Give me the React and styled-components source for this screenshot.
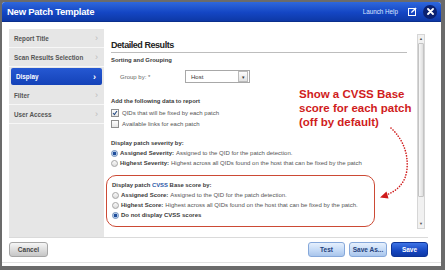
import React from "react";
import styled, { createGlobalStyle } from "styled-components";

const GlobalStyle = createGlobalStyle`
  html, body { margin: 0; padding: 0; background: #6b6b6b; }
  body { font-family: "Liberation Sans", Arial, sans-serif; }
`;

const Frame = styled.div`
  width: 445px;
  height: 270px;
  box-sizing: border-box;
  padding: 2px 4px 4px 2px;
  background: #6b6b6b;
`;

const Window = styled.div`
  width: 100%;
  height: 100%;
  background: #fff;
  display: flex;
  flex-direction: column;
  border-radius: 3px 3px 0 0;
  overflow: hidden;
`;

const TitleBar = styled.div`
  height: 19px;
  display: flex;
  align-items: center;
  padding: 0 4px 0 5px;
  background: linear-gradient(#2f68dc, #1446c4 55%, #0d38a6);
  border-bottom: 1px solid #0a2f8c;
`;

const Title = styled.div`
  color: #fff;
  font-weight: bold;
  font-size: 9.5px;
  letter-spacing: -0.25px;
  flex: 1;
`;

const HelpLink = styled.span`
  color: #dce6ff;
  font-size: 6.3px;
  margin-right: 10px;
`;

const EditIcon = styled.div`
  width: 9px;
  height: 9px;
  margin-right: 6px;
  display: flex;
`;

const CloseBtn = styled.div`
  width: 14px;
  height: 14px;
  border-radius: 50%;
  background: #0b2170;
  display: flex;
  align-items: center;
  justify-content: center;
`;

const Main = styled.div`
  display: flex;
  height: 208px;
  padding: 7px 13px 0 7px;
`;

const Nav = styled.div`
  width: 95px;
  background: #e6e6e6;
  display: flex;
  flex-direction: column;
`;

const NavItem = styled.div`
  height: ${p => (p.active ? "17px" : "18px")};
  margin: ${p => (p.active ? "1px 2px" : "0")};
  padding: 0 6px 0 5px;
  display: flex;
  align-items: center;
  justify-content: space-between;
  font-size: 6.3px;
  font-weight: bold;
  color: ${p => (p.active ? "#fff" : "#555")};
  background: ${p => (p.active ? "linear-gradient(#2558d2, #1442b8)" : "transparent")};
  border-radius: ${p => (p.active ? "2px" : "0")};
  border-bottom: ${p => (p.active ? "none" : "1px solid #f7f7f7")};
  span:last-child {
    font-size: 9px;
    font-weight: ${p => (p.active ? "bold" : "normal")};
    color: ${p => (p.active ? "#fff" : "#bbb")};
  }
`;

const Content = styled.div`
  flex: 1;
  display: flex;
  position: relative;
`;

const Form = styled.div`
  flex: 1;
  padding: 9px 10px 0 7px;
  font-size: 6px;
  color: #444;
`;

const Heading = styled.div`
  font-size: 9px;
  font-weight: bold;
  letter-spacing: -0.45px;
  color: #222;
  line-height: 14px;
  border-bottom: 1px solid #bdbdbd;
`;

const SectionTitle = styled.div`
  font-weight: bold;
  color: #3a3a3a;
  line-height: ${p => p.lh || "11px"};
  margin-top: ${p => p.mt || "0"};
  font-size: 5.9px;
`;

const GroupRow = styled.div`
  display: flex;
  align-items: center;
  margin-top: 4px;
  padding-left: 9px;
  height: 13px;
  color: #666;
`;

const GroupLabel = styled.span`
  width: 65px;
`;

const Select = styled.div`
  width: 65px;
  height: 13px;
  box-sizing: border-box;
  border: 1px solid #a8a8a8;
  display: flex;
  align-items: center;
  padding-left: 5px;
  color: #333;
  background: #fff;
  span { flex: 1; }
`;

const SelectBtn = styled.div`
  width: 8px;
  height: 9px;
  margin-right: 1px;
  border: 1px solid #bbb;
  background: linear-gradient(#fdfdfd, #e2e2e2);
  display: flex;
  align-items: center;
  justify-content: center;
  font-size: 5px;
  color: #333;
`;

const OptionRow = styled.div`
  display: flex;
  align-items: center;
  height: ${p => p.h || "11px"};
  color: #555;
  b { color: #3a3a3a; margin-right: 2px; }
`;

const Check = styled.span`
  width: 6px;
  height: 6px;
  border: 1px solid #8f8f8f;
  background: linear-gradient(#fff, #e6e6e6);
  margin-right: 3px;
  display: flex;
  align-items: center;
  justify-content: center;
`;

const Radio = styled.span`
  width: 5px;
  height: 5px;
  border-radius: 50%;
  border: 1px solid ${p => (p.on ? "#6a8bb8" : "#a5a5a5")};
  background: ${p => (p.on ? "radial-gradient(circle, #1d4d9c 45%, #cfe0f4 60%)" : "linear-gradient(#fafafa, #dcdcdc)")};
  margin-right: 2px;
  flex: none;
`;

const Callout = styled.div`
  width: 269px;
  box-sizing: border-box;
  margin: 7px 0 0 -5px;
  padding: 4px 0 6px 5px;
  border: 1.5px solid #cc4a35;
  border-radius: 10px;
`;

const Blue = styled.span`
  color: #2d5aa8;
`;

const Note = styled.div`
  position: absolute;
  left: 195px;
  top: 58px;
  color: #d01c1c;
  font-weight: bold;
  font-size: 11.5px;
  line-height: 14px;
`;

const Arrow = styled.svg`
  position: absolute;
  left: 270px;
  top: 95px;
`;

const Scrollbar = styled.div`
  width: 8px;
  margin: 5px 3px 8px 0;
  background: #f1f1f1;
  border: 1px solid #d6d6d6;
  box-sizing: border-box;
  display: flex;
  flex-direction: column;
  align-items: center;
  font-size: 4px;
  color: #555;
`;

const ScrollArrow = styled.div`
  height: 8px;
  line-height: 8px;
`;

const Thumb = styled.div`
  width: 6px;
  height: 154px;
  background: linear-gradient(90deg, #f8f8f8, #dedede);
  border: 1px solid #c4c4c4;
  box-sizing: border-box;
  border-radius: 1px;
`;

const Footer = styled.div`
  margin: 0 13px 0 7px;
  border-top: 1px solid #dadada;
  padding-top: 4px;
  display: flex;
  gap: 4px;
`;

const Spacer = styled.div`
  flex: 1;
`;

const Button = styled.div`
  height: 15px;
  width: ${p => p.w || "37px"};
  box-sizing: border-box;
  border-radius: 3px;
  display: flex;
  align-items: center;
  justify-content: center;
  font-size: 6.5px;
  font-weight: bold;
  ${p =>
    p.kind === "primary"
      ? "background: linear-gradient(#3e74e6, #1546c0 60%, #0e39a6); border: 1px solid #0c3398; color: #fff;"
      : p.kind === "light"
      ? "background: linear-gradient(#e6f0fd, #c4daf6 55%, #a9c5ec); border: 1px solid #86a8da; color: #24407a;"
      : "background: linear-gradient(#f6f6f6, #d9d9d9 60%, #c6c6c6); border: 1px solid #a6a6a6; color: #444;"}
`;

const BottomLine = styled.div`
  margin: 5px 0 0;
  border-top: 1px solid #e2e2e2;
`;

const navItems = ["Report Title", "Scan Results Selection", "Display", "Filter", "User Access"];

export default function App() {
  return (
    <>
      <GlobalStyle />
      <Frame>
        <Window>
          <TitleBar>
            <Title>New Patch Template</Title>
            <HelpLink>Launch Help</HelpLink>
            <EditIcon>
              <svg width="9" height="9" viewBox="0 0 9 9">
                <rect x="0.5" y="1.5" width="7" height="7" fill="none" stroke="#fff" strokeWidth="1" />
                <path d="M3 6 L3.4 4.6 L7.6 0.4 L8.6 1.4 L4.4 5.6 Z" fill="#fff" />
              </svg>
            </EditIcon>
            <CloseBtn>
              <svg width="7" height="7" viewBox="0 0 7 7">
                <path d="M1 1 L6 6 M6 1 L1 6" stroke="#fff" strokeWidth="1.8" strokeLinecap="round" />
              </svg>
            </CloseBtn>
          </TitleBar>

          <Main>
            <Nav>
              {navItems.map(item => (
                <NavItem key={item} active={item === "Display"}>
                  <span>{item}</span>
                  <span>›</span>
                </NavItem>
              ))}
            </Nav>

            <Content>
              <Form>
                <Heading>Detailed Results</Heading>
                <SectionTitle mt="2px">Sorting and Grouping</SectionTitle>
                <GroupRow>
                  <GroupLabel>Group by: *</GroupLabel>
                  <Select>
                    <span>Host</span>
                    <SelectBtn>▾</SelectBtn>
                  </Select>
                </GroupRow>

                <SectionTitle mt="13px">Add the following data to report</SectionTitle>
                <OptionRow>
                  <Check>
                    <svg width="6" height="6" viewBox="0 0 6 6">
                      <path d="M1 3 L2.4 4.6 L5 1" fill="none" stroke="#2b4f86" strokeWidth="1.1" />
                    </svg>
                  </Check>
                  QIDs that will be fixed by each patch
                </OptionRow>
                <OptionRow>
                  <Check />
                  Available links for each patch
                </OptionRow>

                <SectionTitle mt="9px" lh="10px">Display patch severity by:</SectionTitle>
                <OptionRow h="10px">
                  <Radio on />
                  <b>Assigned Severity:</b> Assigned to the QID for the patch detection.
                </OptionRow>
                <OptionRow h="10px">
                  <Radio />
                  <b>Highest Severity:</b> Highest across all QIDs found on the host that can be fixed by the patch
                </OptionRow>

                <Callout>
                  <SectionTitle lh="10px">
                    Display patch <Blue>CVSS</Blue> Base score by:
                  </SectionTitle>
                  <OptionRow h="10px">
                    <Radio />
                    <b>Assigned Score:</b> Assigned to the QID for the patch detection.
                  </OptionRow>
                  <OptionRow h="10px">
                    <Radio />
                    <b>Highest Score:</b> Highest across all QIDs found on the host that can be fixed by the patch.
                  </OptionRow>
                  <OptionRow h="10px">
                    <Radio on />
                    <b>Do not display CVSS scores</b>
                  </OptionRow>
                </Callout>
              </Form>

              <Scrollbar>
                <ScrollArrow>▲</ScrollArrow>
                <Thumb />
                <Spacer />
                <ScrollArrow>▼</ScrollArrow>
              </Scrollbar>

              <Note>
                Show a CVSS Base
                <br />
                score for each patch
                <br />
                (off by default)
              </Note>
              <Arrow width="45" height="80" viewBox="374 123 45 80">
                <path
                  d="M391 127 Q409 144 407 168 Q405 187 386 194"
                  fill="none"
                  stroke="#d01c1c"
                  strokeWidth="1.6"
                  strokeDasharray="0.1 2.6"
                  strokeLinecap="round"
                />
                <path d="M380 196.5 L386.5 190.5 L388.5 197.5 Z" fill="#d01c1c" />
              </Arrow>
            </Content>
          </Main>

          <Footer>
            <Button w="39px">Cancel</Button>
            <Spacer />
            <Button kind="light">Test</Button>
            <Button kind="light" w="38px">Save As...</Button>
            <Button kind="primary">Save</Button>
          </Footer>
          <BottomLine />
        </Window>
      </Frame>
    </>
  );
}
